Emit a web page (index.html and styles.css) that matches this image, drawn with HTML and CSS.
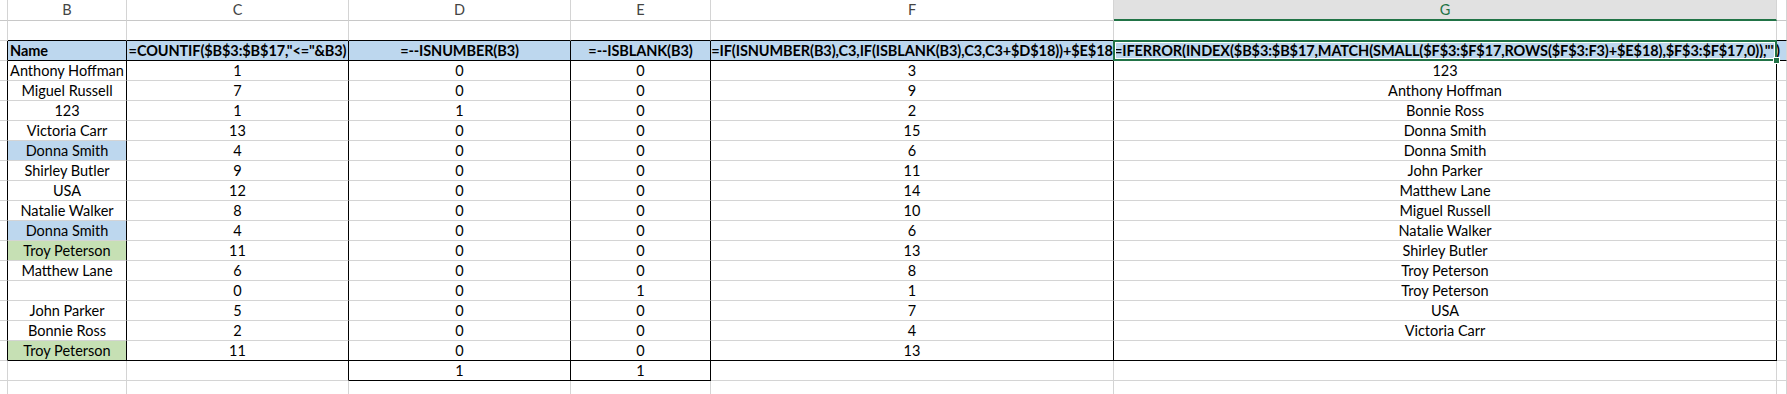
FILE: index.html
```html
<!DOCTYPE html>
<html>
<head>
<meta charset="utf-8">
<link rel="stylesheet" href="styles.css">
</head>
<body>
<div class="sheet">
  <div class="row colhead">
    <div class="c"></div><div class="c">B</div><div class="c">C</div><div class="c">D</div><div class="c">E</div><div class="c">F</div><div class="c sel">G</div><div class="c"></div>
  </div>
  <div class="row">
    <div class="c"></div><div class="c kb"></div><div class="c kb"></div><div class="c kb"></div><div class="c kb"></div><div class="c kb"></div><div class="c kb"></div><div class="c kb"></div>
  </div>
  <div class="row head">
    <div class="c kr"></div><div class="c k left">Name</div><div class="c k">=COUNTIF($B$3:$B$17,"&lt;="&amp;B3)</div><div class="c k">=--ISNUMBER(B3)</div><div class="c k">=--ISBLANK(B3)</div><div class="c k">=IF(ISNUMBER(B3),C3,IF(ISBLANK(B3),C3,C3+$D$18))+$E$18</div><div class="c k active">=IFERROR(INDEX($B$3:$B$17,MATCH(SMALL($F$3:$F$17,ROWS($F$3:F3)+$E$18),$F$3:$F$17,0)),"")</div><div class="c blue kb"></div>
  </div>
  <div class="row"><div class="c kr"></div><div class="c kr">Anthony Hoffman</div><div class="c kr">1</div><div class="c kr">0</div><div class="c kr">0</div><div class="c kr">3</div><div class="c kr">123</div><div class="c"></div></div>
  <div class="row"><div class="c kr"></div><div class="c kr">Miguel Russell</div><div class="c kr">7</div><div class="c kr">0</div><div class="c kr">0</div><div class="c kr">9</div><div class="c kr">Anthony Hoffman</div><div class="c"></div></div>
  <div class="row"><div class="c kr"></div><div class="c kr">123</div><div class="c kr">1</div><div class="c kr">1</div><div class="c kr">0</div><div class="c kr">2</div><div class="c kr">Bonnie Ross</div><div class="c"></div></div>
  <div class="row"><div class="c kr"></div><div class="c kr">Victoria Carr</div><div class="c kr">13</div><div class="c kr">0</div><div class="c kr">0</div><div class="c kr">15</div><div class="c kr">Donna Smith</div><div class="c"></div></div>
  <div class="row"><div class="c kr"></div><div class="c kr blue">Donna Smith</div><div class="c kr">4</div><div class="c kr">0</div><div class="c kr">0</div><div class="c kr">6</div><div class="c kr">Donna Smith</div><div class="c"></div></div>
  <div class="row"><div class="c kr"></div><div class="c kr">Shirley Butler</div><div class="c kr">9</div><div class="c kr">0</div><div class="c kr">0</div><div class="c kr">11</div><div class="c kr">John Parker</div><div class="c"></div></div>
  <div class="row"><div class="c kr"></div><div class="c kr">USA</div><div class="c kr">12</div><div class="c kr">0</div><div class="c kr">0</div><div class="c kr">14</div><div class="c kr">Matthew Lane</div><div class="c"></div></div>
  <div class="row"><div class="c kr"></div><div class="c kr">Natalie Walker</div><div class="c kr">8</div><div class="c kr">0</div><div class="c kr">0</div><div class="c kr">10</div><div class="c kr">Miguel Russell</div><div class="c"></div></div>
  <div class="row"><div class="c kr"></div><div class="c kr blue">Donna Smith</div><div class="c kr">4</div><div class="c kr">0</div><div class="c kr">0</div><div class="c kr">6</div><div class="c kr">Natalie Walker</div><div class="c"></div></div>
  <div class="row"><div class="c kr"></div><div class="c kr green">Troy Peterson</div><div class="c kr">11</div><div class="c kr">0</div><div class="c kr">0</div><div class="c kr">13</div><div class="c kr">Shirley Butler</div><div class="c"></div></div>
  <div class="row"><div class="c kr"></div><div class="c kr">Matthew Lane</div><div class="c kr">6</div><div class="c kr">0</div><div class="c kr">0</div><div class="c kr">8</div><div class="c kr">Troy Peterson</div><div class="c"></div></div>
  <div class="row"><div class="c kr"></div><div class="c kr"></div><div class="c kr">0</div><div class="c kr">0</div><div class="c kr">1</div><div class="c kr">1</div><div class="c kr">Troy Peterson</div><div class="c"></div></div>
  <div class="row"><div class="c kr"></div><div class="c kr">John Parker</div><div class="c kr">5</div><div class="c kr">0</div><div class="c kr">0</div><div class="c kr">7</div><div class="c kr">USA</div><div class="c"></div></div>
  <div class="row"><div class="c kr"></div><div class="c kr">Bonnie Ross</div><div class="c kr">2</div><div class="c kr">0</div><div class="c kr">0</div><div class="c kr">4</div><div class="c kr">Victoria Carr</div><div class="c"></div></div>
  <div class="row"><div class="c kr"></div><div class="c k green">Troy Peterson</div><div class="c k">11</div><div class="c k">0</div><div class="c k">0</div><div class="c k">13</div><div class="c k"></div><div class="c"></div></div>
  <div class="row"><div class="c"></div><div class="c"></div><div class="c kr"></div><div class="c k">1</div><div class="c k">1</div><div class="c"></div><div class="c"></div><div class="c"></div></div>
  <div class="row"><div class="c"></div><div class="c"></div><div class="c"></div><div class="c"></div><div class="c"></div><div class="c"></div><div class="c"></div><div class="c"></div></div>
</div>
</body>
</html>
```
FILE: styles.css
```css
html, body {
  margin: 0;
  padding: 0;
  background: #ffffff;
}
body {
  font-family: Lato, "Liberation Sans", sans-serif;
  font-size: 14.5px;
  color: #000;
  overflow: hidden;
}
.sheet {
  display: flex;
  flex-direction: column;
  width: 1787px;
}
.row {
  display: grid;
  grid-template-columns: 8px 119px 222px 222px 140px 403px 663px 1fr;
  height: 20px;
}
.c {
  box-sizing: border-box;
  border-right: 1px solid #d4d4d4;
  border-bottom: 1px solid #d4d4d4;
  text-align: center;
  line-height: 19px;
  white-space: nowrap;
  overflow: visible;
  position: relative;
}
.colhead {
  height: 21px;
}
.colhead .c {
  color: #444;
  line-height: 20px;
  border-bottom-color: #c8c8c8;
}
.colhead .sel {
  background: #e1e1e1;
  color: #217346;
  border-bottom: 2px solid #217346;
  line-height: 19px;
}
.kr { border-right-color: #000; }
.kb { border-bottom-color: #000; }
.k { border-right-color: #000; border-bottom-color: #000; }
.head .c { font-weight: 700; background: #bdd7ee; letter-spacing: -0.1px; }
.head .c:first-child { background: transparent; }
.head .left { text-align: left; padding-left: 2px; }
.blue { background: #bdd7ee; }
.green { background: #c6e0b4; }
.active { z-index: 2; }
.active::before {
  content: "";
  position: absolute;
  left: -1px;
  top: -1px;
  right: -1px;
  bottom: -1px;
  border: 2px solid #217346;
  box-shadow: inset 0 0 0 1px #ffffff;
  pointer-events: none;
}
.active::after {
  content: "";
  position: absolute;
  right: -4px;
  bottom: -4px;
  width: 5px;
  height: 5px;
  background: #217346;
  border: 1px solid #ffffff;
}
```
